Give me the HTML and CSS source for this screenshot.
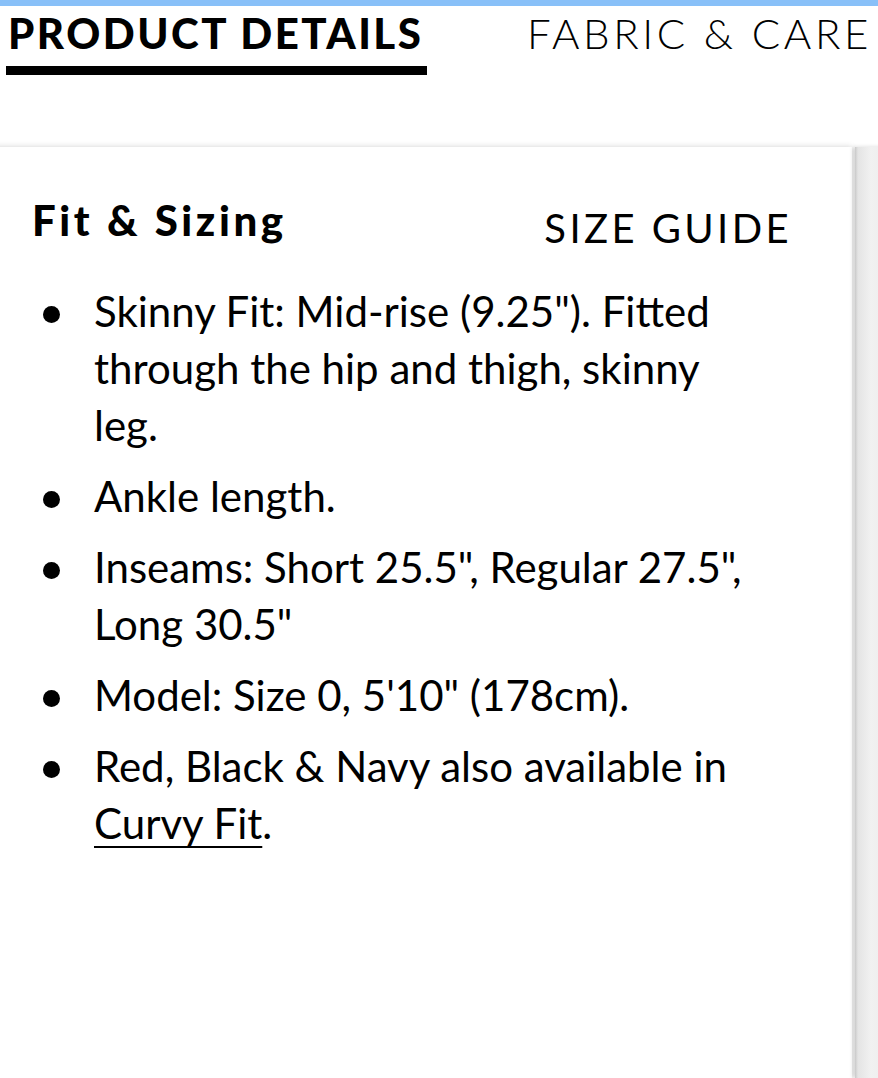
FILE: index.html
```html
<!DOCTYPE html>
<html lang="en">
<head>
<meta charset="utf-8">
<title>Product Details</title>
<link rel="stylesheet" href="styles.css">
</head>
<body>
<div class="topbar"></div>
<nav class="tabs">
  <div class="tab tab-active">PRODUCT DETAILS</div>
  <div class="tab">FABRIC &amp; CARE</div>
</nav>
<div class="carousel">
  <section class="card">
    <div class="card-head">
      <h2 class="card-title">Fit &amp; Sizing</h2>
      <a class="size-guide">SIZE GUIDE</a>
    </div>
    <ul class="details">
      <li><span class="text">Skinny Fit: Mid-rise (9.25"). Fitted through the hip and thigh, skinny leg.</span></li>
      <li><span class="text">Ankle length.</span></li>
      <li><span class="text">Inseams: Short 25.5", Regular 27.5", Long 30.5"</span></li>
      <li><span class="text">Model: Size 0, 5'10" (178cm).</span></li>
      <li><span class="text">Red, Black &amp; Navy also available in <a class="link">Curvy Fit</a>.</span></li>
    </ul>
  </section>
  <section class="card card-next"></section>
</div>
</body>
</html>
```

FILE: styles.css
```css
html, body {
  margin: 0;
  padding: 0;
  background: #fff;
  overflow: hidden;
}
body {
  font-family: Lato, "Noto Sans", sans-serif;
  color: #000;
  width: 878px;
  height: 1078px;
}
.topbar {
  height: 6px;
  background: #88c0f8;
}
.tabs {
  display: flex;
  align-items: flex-start;
  padding-left: 6px;
  gap: 100px;
}
.tab {
  font-size: 42px;
  line-height: 50px;
  font-weight: 300;
  letter-spacing: 3.6px;
  padding-top: 2px;
  white-space: nowrap;
}
.tab-active {
  font-weight: 900;
  letter-spacing: 2.5px;
  padding-left: 2px;
  padding-bottom: 8px;
  border-bottom: 9px solid #000;
  width: 421px;
  box-sizing: border-box;
}
.carousel {
  display: flex;
  gap: 3px;
  margin-top: 72px;
  margin-left: -20px;
}
.card {
  flex: 0 0 872px;
  height: 931px;
  background: #fff;
  box-shadow: 0 0 6px rgba(0, 0, 0, 0.18);
  box-sizing: border-box;
  padding: 49px 60px 0 52px;
}
.card-next {
  flex: 0 0 40px;
  padding: 0;
  background: linear-gradient(90deg, #c9c9c9 0, #e4e4e4 3px, #f1f1f1 40%, #ededed 80%, #d4d4d4 100%);
  box-shadow: -2px 0 4px rgba(0, 0, 0, 0.15);
}
.card-head {
  display: flex;
  justify-content: space-between;
  align-items: flex-start;
}
.card-title {
  margin: 0;
  font-size: 42px;
  line-height: 48px;
  font-weight: 900;
  letter-spacing: 3.6px;
}
.size-guide {
  font-size: 40px;
  line-height: 48px;
  font-weight: 400;
  letter-spacing: 3.4px;
  padding-top: 8px;
}
.details {
  list-style: none;
  margin: 31px 0 0;
  padding: 0 0 0 11px;
}
.details li {
  display: grid;
  grid-template-columns: 51px 665px;
  font-size: 42px;
  line-height: 57px;
  margin-bottom: 14px;
}
.details li::before {
  content: "";
  width: 17px;
  height: 17px;
  border-radius: 50%;
  background: #000;
  margin-top: 23px;
}
.link {
  text-decoration: underline;
  text-decoration-thickness: 2px;
  text-underline-offset: 7px;
}
```
